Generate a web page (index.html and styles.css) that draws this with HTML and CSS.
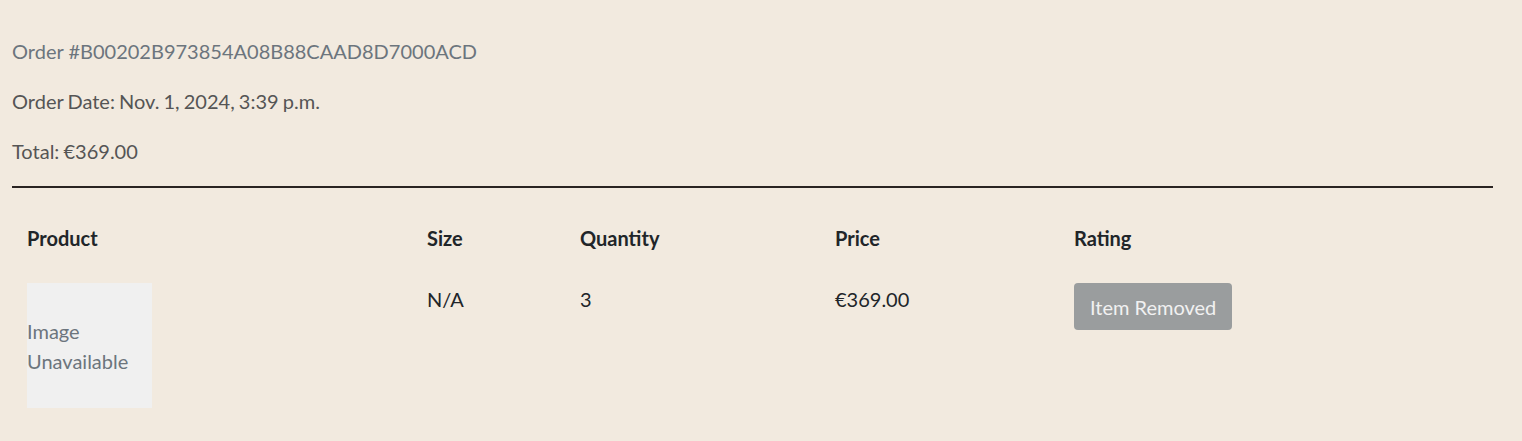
FILE: index.html
```html
<!DOCTYPE html>
<html>
<head>
<meta charset="utf-8">
<link rel="stylesheet" href="styles.css">
</head>
<body>
<div class="order">
  <p class="order-id">Order #B00202B973854A08B88CAAD8D7000ACD</p>
  <p class="order-meta">Order Date: Nov. 1, 2024, 3:39 p.m.</p>
  <p class="order-meta">Total: €369.00</p>
  <hr class="divider">
  <table class="items">
    <thead>
      <tr>
        <th class="c-product">Product</th>
        <th class="c-size">Size</th>
        <th class="c-qty">Quantity</th>
        <th class="c-price">Price</th>
        <th class="c-rating">Rating</th>
      </tr>
    </thead>
    <tbody>
      <tr>
        <td><div class="thumb"><span>Image Unavailable</span></div></td>
        <td>N/A</td>
        <td>3</td>
        <td>€369.00</td>
        <td><button class="removed" disabled>Item Removed</button></td>
      </tr>
    </tbody>
  </table>
</div>
</body>
</html>
```
FILE: styles.css
```css
html, body {
  margin: 0;
  padding: 0;
  background: #f2eadf;
}
body {
  font-family: Lato, "Open Sans", sans-serif;
  font-size: 20px;
  color: #212529;
}
.order {
  padding: 36px 29px 0 12px;
}
.order p {
  margin: 0 0 20px 0;
  line-height: 30px;
}
.order-id {
  color: #6c757d;
}
.order-meta {
  color: #555555;
  word-spacing: -1px;
}
.divider {
  border: 0;
  border-top: 2px solid #2a2422;
  margin: 0 0 19px 0;
}
.items {
  width: 100%;
  border-collapse: collapse;
}
.items th, .items td {
  padding: 15px;
  text-align: left;
  vertical-align: top;
  line-height: 32px;
}
.items th {
  font-weight: bold;
  line-height: 30px;
  padding-top: 16px;
}
.c-product { width: 370px; }
.c-size { width: 123px; }
.c-qty { width: 225px; }
.c-price { width: 209px; }
.thumb {
  width: 125px;
  height: 125px;
  background: #f0f0f0;
  display: flex;
  align-items: center;
  color: #6c757d;
  line-height: 30px;
}
.thumb span {
  width: 120px;
}
.removed {
  font-family: Lato, "Open Sans", sans-serif;
  font-size: 20px;
  line-height: 31px;
  padding: 9px 16px 7px 16px;
  border: 0;
  border-radius: 4px;
  background: #9a9d9e;
  color: #f1f1f1;
  display: block;
}
```
